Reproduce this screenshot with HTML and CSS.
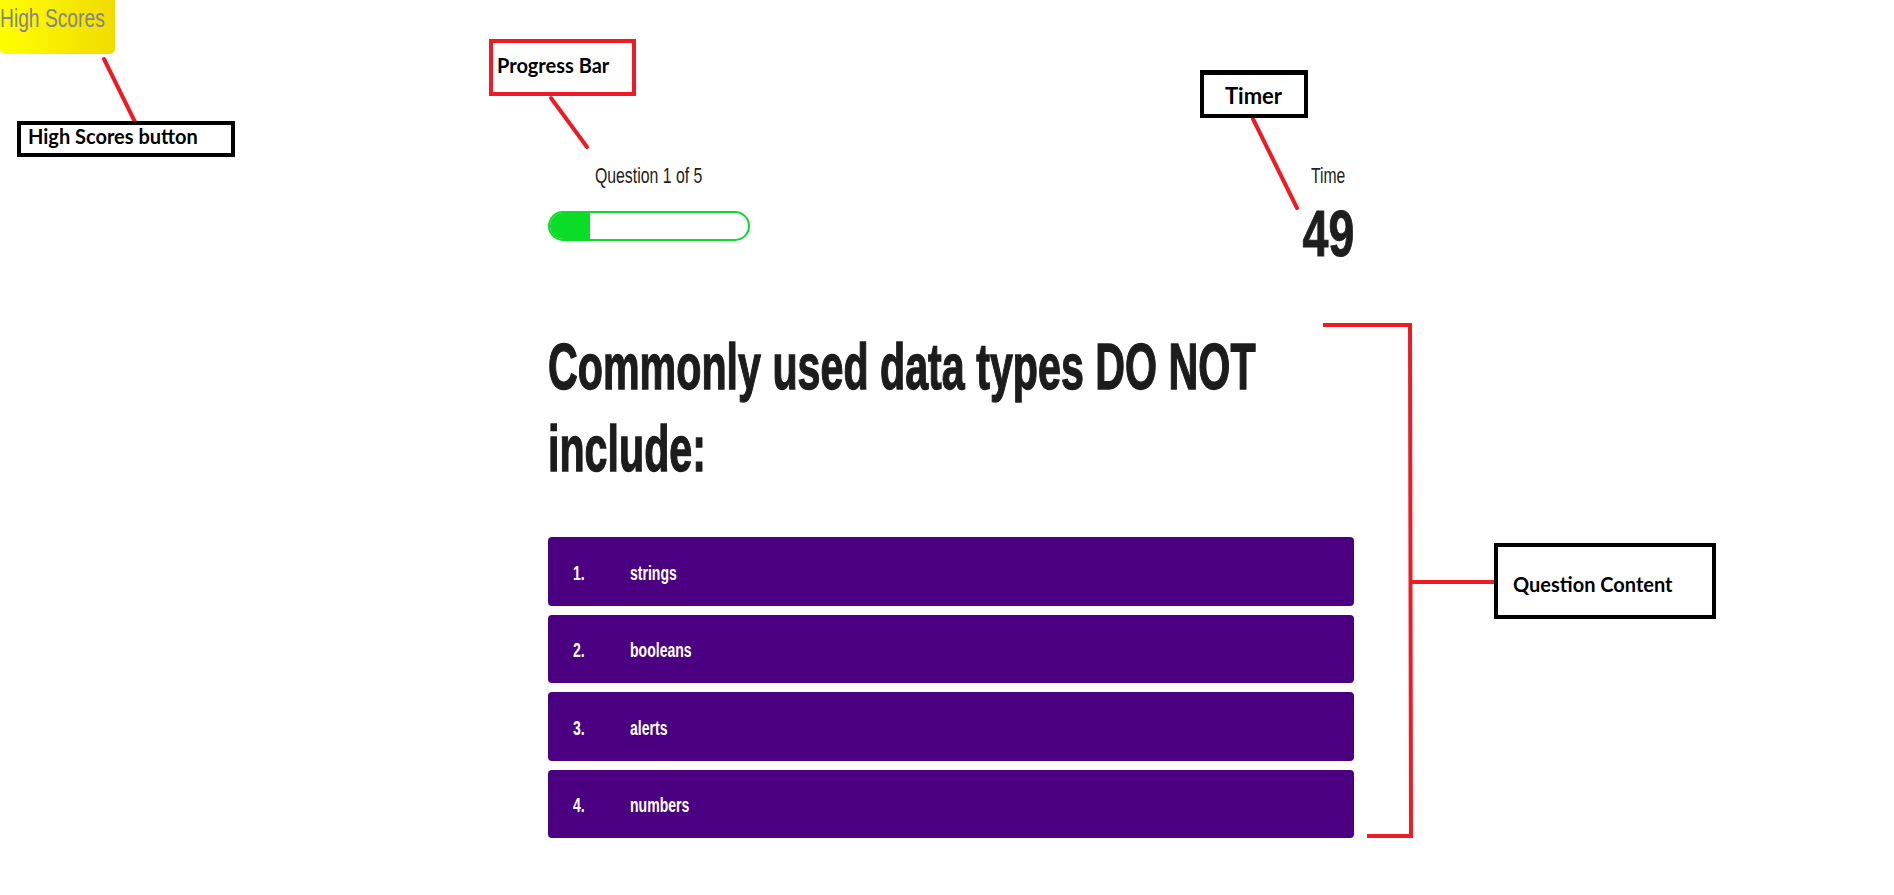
FILE: index.html
```html
<!DOCTYPE html>
<html lang="en">
<head>
<meta charset="utf-8">
<title>Code Quiz</title>
<link rel="stylesheet" href="styles.css">
</head>
<body>
<header class="top-bar">
  <button class="hs-btn" type="button"><span class="sq sq-hs">High Scores</span></button>
</header>

<main class="quiz">
  <div class="status">
    <div class="progress">
      <p class="progress-label"><span class="sq sq-small">Question 1 of 5</span></p>
      <div class="bar"><div class="bar-fill" style="width:20%"></div></div>
    </div>
    <div class="timer">
      <p class="timer-label"><span class="sq sq-time">Time</span></p>
      <p class="timer-value"><span class="sq sq-num">49</span></p>
    </div>
  </div>

  <h1 class="question"><span class="sq sq-q">Commonly used data types DO NOT<br>include:</span></h1>

  <ol class="answers">
    <li><button class="answer" type="button"><span class="num"><span class="sq sq-ans">1.</span></span><span class="sq sq-ans">strings</span></button></li>
    <li><button class="answer" type="button"><span class="num"><span class="sq sq-ans">2.</span></span><span class="sq sq-ans">booleans</span></button></li>
    <li><button class="answer" type="button"><span class="num"><span class="sq sq-ans">3.</span></span><span class="sq sq-ans">alerts</span></button></li>
    <li><button class="answer" type="button"><span class="num"><span class="sq sq-ans">4.</span></span><span class="sq sq-ans">numbers</span></button></li>
  </ol>
</main>

<div class="notes">
  <svg class="note-lines" width="1894" height="895" viewBox="0 0 1894 895">
    <g stroke="#ed1c24" stroke-width="4" stroke-linecap="round" fill="none">
      <line x1="104" y1="59" x2="135" y2="122"/>
      <line x1="551" y1="98" x2="587" y2="147"/>
      <line x1="1253" y1="119" x2="1297" y2="208"/>
    </g>
    <g stroke="#ed1c24" stroke-width="4" stroke-linecap="square" fill="none">
      <polyline points="1325,325 1410,325 1411,836 1369,836"/>
      <line x1="1411" y1="582" x2="1494" y2="582"/>
    </g>
  </svg>
  <div class="note note-hs">High Scores button</div>
  <div class="note note-progress">Progress Bar</div>
  <div class="note note-timer">Timer</div>
  <div class="note note-content">Question Content</div>
</div>
</body>
</html>
```

FILE: styles.css
```css
html, body {
  margin: 0;
  padding: 0;
  background: #ffffff;
}

body {
  position: relative;
  width: 1894px;
  height: 895px;
  overflow: hidden;
  font-family: "Liberation Sans", Arial, sans-serif;
  color: #222222;
}

/* squeezed text to imitate a condensed display face */
.sq {
  display: inline-block;
  white-space: nowrap;
  transform-origin: left center;
}
.sq-hs { transform: scaleX(0.726); }
.sq-small { transform: scaleX(0.72); transform-origin: center; }
.sq-time { transform: scaleX(0.714); transform-origin: center; }
.sq-num { transform: scaleX(0.71); transform-origin: center; }
.sq-q { transform: scaleX(0.634); transform-origin: left top; }
.sq-ans { transform: scaleX(0.72); }

/* header */
.top-bar {
  display: flex;
  height: 54px;
}

.hs-btn {
  display: block;
  width: 115px;
  margin: 0;
  padding: 0 0 18px 0;
  border: 0;
  border-radius: 0 0 5px 5px;
  background: linear-gradient(to right, #ffff00, #f0db00);
  color: #858585;
  font-family: inherit;
  font-size: 26.5px;
  line-height: 36px;
  text-align: left;
  cursor: pointer;
}

/* quiz area */
.quiz {
  width: 806px;
  margin: 109px 0 0 548px;
}

.status {
  display: flex;
  justify-content: space-between;
  align-items: flex-start;
}

.progress {
  display: flex;
  flex-direction: column;
  align-items: center;
  width: 202px;
}

.progress-label,
.timer-label {
  margin: 0;
  font-size: 22px;
  line-height: 26px;
  color: #222222;
}

.bar {
  box-sizing: border-box;
  width: 202px;
  height: 30px;
  margin-top: 22px;
  border: 2px solid #0adc28;
  border-radius: 15px;
  overflow: hidden;
  background: #ffffff;
}

.bar-fill {
  height: 100%;
  background: #0adc28;
}

.timer {
  display: flex;
  flex-direction: column;
  align-items: center;
  width: 52px;
}

.timer-value {
  margin: 15px 0 0 0;
  font-size: 65.6px;
  font-weight: 700;
  line-height: 60px;
  color: #1e1e1e;
  -webkit-text-stroke: 1px #1e1e1e;
}

.question {
  height: 164px;
  margin: 62px 0 47px 0;
  font-size: 65px;
  font-weight: 700;
  line-height: 82px;
  color: #1c1c1c;
  -webkit-text-stroke: 1.4px #1c1c1c;
}

.answers {
  display: flex;
  flex-direction: column;
  gap: 9px;
  margin: 0;
  padding: 0;
  list-style: none;
}

.answer {
  display: flex;
  align-items: center;
  box-sizing: border-box;
  width: 100%;
  height: 68.5px;
  margin: 0;
  padding: 4px 0 0 25px;
  border: 0;
  border-radius: 4px;
  background: #4b0082;
  color: #ffffff;
  font-family: inherit;
  font-size: 19.5px;
  font-weight: 700;
  text-align: left;
  cursor: pointer;
}

.num {
  flex: none;
  width: 57px;
}

/* annotation layer */
.notes {
  position: absolute;
  top: 0;
  left: 0;
  width: 1894px;
  height: 895px;
  pointer-events: none;
}

.note-lines {
  position: absolute;
  top: 0;
  left: 0;
}

.note {
  position: absolute;
  box-sizing: border-box;
  border: 4px solid #000000;
  background: #ffffff;
  color: #000000;
  font-family: Lato, "Liberation Sans", sans-serif;
  font-weight: 700;
  font-size: 20px;
  line-height: 20px;
  white-space: nowrap;
}

.note-hs {
  left: 17px;
  top: 121px;
  width: 218px;
  height: 36px;
  padding: 1px 0 0 7px;
}

.note-progress {
  left: 489px;
  top: 39px;
  width: 147px;
  height: 57px;
  padding: 12px 0 0 4px;
  border-color: #ed1c24;
}

.note-timer {
  left: 1200px;
  top: 70px;
  width: 108px;
  height: 48px;
  padding: 10px 0 0 21px;
  border-width: 5px 4px 4px 4px;
  font-size: 22px;
  line-height: 22px;
}

.note-content {
  left: 1494px;
  top: 543px;
  width: 222px;
  height: 76px;
  padding: 27px 0 0 15px;
}
```
